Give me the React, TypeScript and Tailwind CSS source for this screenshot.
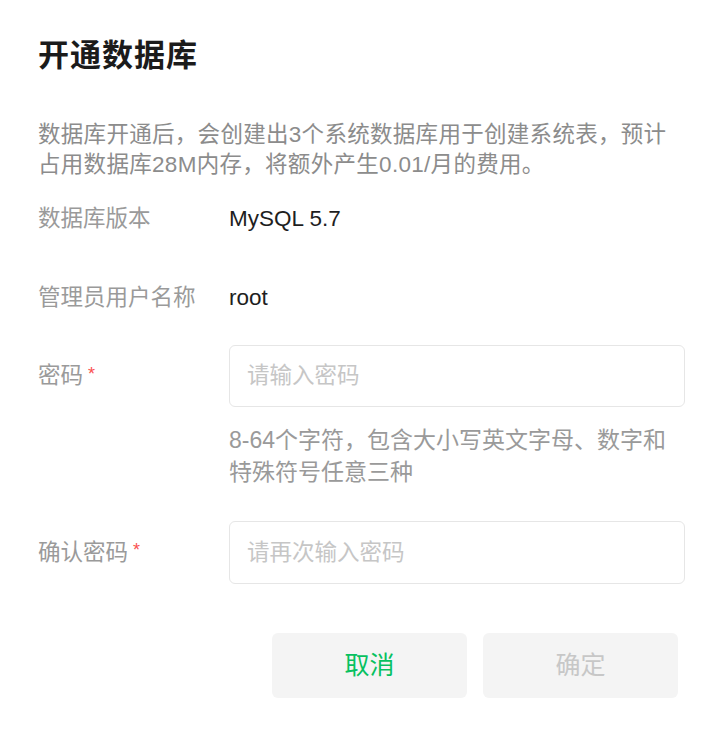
import React from "react";

const font = { fontFamily: '"Liberation Sans", "Noto Sans CJK SC", sans-serif' };

export default function App() {
  return (
    <div className="w-[720px] h-[736px] bg-white pl-[38px] pr-[35px] pt-[36px]" style={font}>
      <h1 className="text-[31px] leading-[40px] font-semibold text-[#1b1b1b] tracking-[1px]">开通数据库</h1>
      <p className="mt-[44px] text-[22.5px] leading-[30px] text-[#8c8c8c] tracking-[0.3px]">
        数据库开通后，会创建出3个系统数据库用于创建系统表，预计
        <br />
        占用数据库28M内存，将额外产生0.01/月的费用。
      </p>
      <div className="flex items-center h-[79px] mt-[-1px]">
        <div className="w-[191px] text-[22.5px] text-[#9a9a9a]">数据库版本</div>
        <div className="text-[22.5px] text-[#1e1e1e]">MySQL 5.7</div>
      </div>
      <div className="flex items-center h-[79px]">
        <div className="w-[191px] text-[22.5px] text-[#9a9a9a]">管理员用户名称</div>
        <div className="text-[22.5px] text-[#1e1e1e]">root</div>
      </div>
      <div className="flex items-start mt-[8px]">
        <div className="w-[191px] shrink-0 h-[62px] text-[22.5px] text-[#9a9a9a] flex items-center">
          密码<span className="text-[#fa5151] text-[18px] ml-[5px] -mt-[4px]">*</span>
        </div>
        <div className="flex-1">
          <div className="h-[62px] border border-[#e6e6e6] rounded-[6px] flex items-center px-[17px] text-[22.5px] text-[#c6c6c6]">
            请输入密码
          </div>
          <p className="mt-[17px] text-[23px] leading-[32px] text-[#9a9a9a]">
            8-64个字符，包含大小写英文字母、数字和
            <br />
            特殊符号任意三种
          </p>
        </div>
      </div>
      <div className="flex items-start mt-[33px]">
        <div className="w-[191px] shrink-0 h-[63px] text-[22.5px] text-[#9a9a9a] flex items-center">
          确认密码<span className="text-[#fa5151] text-[18px] ml-[5px] -mt-[4px]">*</span>
        </div>
        <div className="flex-1">
          <div className="h-[63px] border border-[#e6e6e6] rounded-[6px] flex items-center px-[17px] text-[22.5px] text-[#c6c6c6]">
            请再次输入密码
          </div>
        </div>
      </div>
      <div className="flex mt-[49px] pl-[234px] pr-[7px] gap-[16px]">
        <button className="w-[195px] h-[65px] rounded-[6px] bg-[#f4f4f4] text-[25px] font-normal text-[#07c160]">取消</button>
        <button className="w-[195px] h-[65px] rounded-[6px] bg-[#f4f4f4] text-[25px] font-normal text-[#c7c7c7]">确定</button>
      </div>
    </div>
  );
}
